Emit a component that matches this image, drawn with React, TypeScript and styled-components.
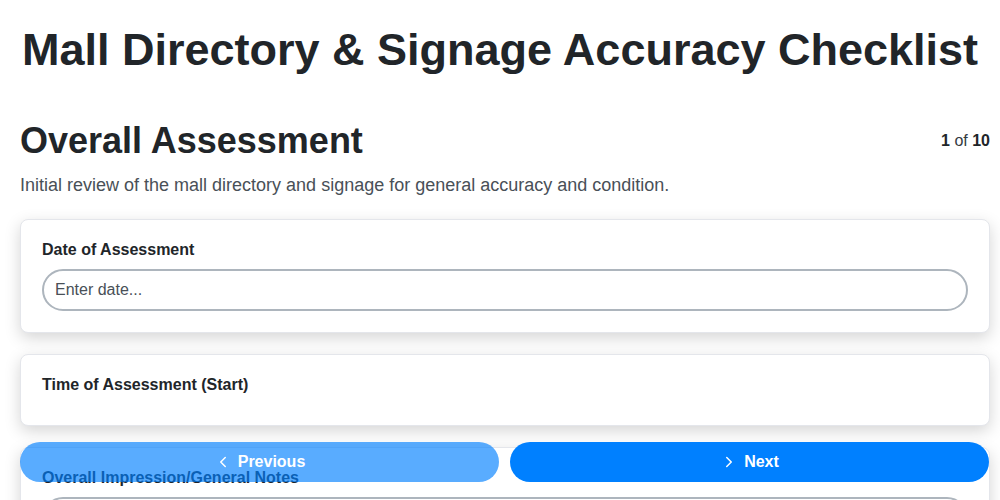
import styled, { createGlobalStyle } from 'styled-components';
import { ChevronLeft, ChevronRight } from 'lucide-react';

const GlobalStyle = createGlobalStyle`
  html, body {
    margin: 0;
    padding: 0;
    background: #ffffff;
    font-family: "Liberation Sans", Arial, sans-serif;
    color: #212529;
  }
  body::-webkit-scrollbar {
    display: none;
  }
`;

const Title = styled.h1`
  margin: 0;
  padding: 24px 0 0;
  font-size: 45px;
  line-height: 52px;
  font-weight: 700;
  text-align: center;
  color: #212529;
`;

const Section = styled.section`
  padding: 0 10px 120px 20px;
`;

const SectionHeader = styled.div`
  display: flex;
  justify-content: space-between;
  align-items: flex-start;
  margin-top: 44px;
`;

const SectionTitle = styled.h2`
  margin: 0;
  font-size: 36px;
  line-height: 42px;
  font-weight: 700;
  color: #212529;
`;

const StepCount = styled.div`
  font-size: 16px;
  line-height: 18px;
  margin-top: 12px;
  color: #343a40;

  b {
    color: #212529;
  }
`;

const Description = styled.p`
  margin: 12px 0 23px;
  font-size: 18px;
  line-height: 22px;
  color: #495057;
`;

const CardList = styled.div`
  display: flex;
  flex-direction: column;
  gap: 21px;
`;

const Card = styled.div`
  background: #ffffff;
  border: 1px solid #e4e6eb;
  border-radius: 8px;
  box-shadow: 0 5px 16px rgba(0, 0, 0, 0.17);
  padding: 20px 21px 21px;
`;

const Label = styled.label`
  display: block;
  font-size: 16px;
  line-height: 20px;
  font-weight: 700;
  color: #212529;
  margin-bottom: 9px;
`;

const TextInput = styled.input`
  display: block;
  width: 100%;
  box-sizing: border-box;
  height: 42px;
  padding: 0 11px;
  border: 2px solid #adb5bd;
  border-radius: 21px;
  font-family: "Liberation Sans", Arial, sans-serif;
  font-size: 16px;
  color: #212529;
  background: #ffffff;
  outline: none;

  &::placeholder {
    color: #495057;
  }
`;

const EmptyField = styled.div`
  height: 0;
`;

const NavBar = styled.div`
  position: fixed;
  left: 20px;
  right: 11px;
  bottom: 18px;
  display: flex;
  gap: 11px;
`;

const NavButton = styled.button<{ $disabled?: boolean }>`
  flex: 1;
  height: 40px;
  display: flex;
  align-items: center;
  justify-content: center;
  gap: 6px;
  border: none;
  border-radius: 20px;
  background: #0080ff;
  color: #ffffff;
  font-family: "Liberation Sans", Arial, sans-serif;
  font-size: 16px;
  font-weight: 700;
  opacity: ${(p) => (p.$disabled ? 0.65 : 1)};
  cursor: ${(p) => (p.$disabled ? 'default' : 'pointer')};
`;

const fields = [
  { label: 'Date of Assessment', placeholder: 'Enter date...' },
  { label: 'Time of Assessment (Start)' },
  { label: 'Overall Impression/General Notes', placeholder: 'Enter notes...' },
];

export default function App() {
  return (
    <>
      <GlobalStyle />
      <Title>Mall Directory &amp; Signage Accuracy Checklist</Title>
      <Section>
        <SectionHeader>
          <SectionTitle>Overall Assessment</SectionTitle>
          <StepCount>
            <b>1</b> of <b>10</b>
          </StepCount>
        </SectionHeader>
        <Description>
          Initial review of the mall directory and signage for general accuracy and condition.
        </Description>
        <CardList>
          {fields.map((f) => (
            <Card key={f.label}>
              <Label>{f.label}</Label>
              {f.placeholder ? <TextInput placeholder={f.placeholder} /> : <EmptyField />}
            </Card>
          ))}
        </CardList>
      </Section>
      <NavBar>
        <NavButton $disabled>
          <ChevronLeft size={18} strokeWidth={2} />
          Previous
        </NavButton>
        <NavButton>
          <ChevronRight size={18} strokeWidth={2} />
          Next
        </NavButton>
      </NavBar>
    </>
  );
}
